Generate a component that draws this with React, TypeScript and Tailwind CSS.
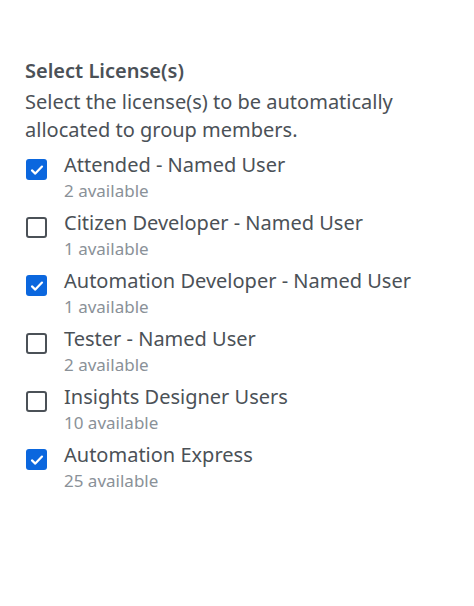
const licenses = [
  { name: "Attended - Named User", available: 2, checked: true },
  { name: "Citizen Developer - Named User", available: 1, checked: false },
  { name: "Automation Developer - Named User", available: 1, checked: true },
  { name: "Tester - Named User", available: 2, checked: false },
  { name: "Insights Designer Users", available: 10, checked: false },
  { name: "Automation Express", available: 25, checked: true },
];

function Checkbox({ checked }: { checked: boolean }) {
  if (checked) {
    return (
      <span className="flex h-[21px] w-[21px] shrink-0 items-center justify-center rounded-[3px] bg-[#0b67de]">
        <svg viewBox="0 0 16 16" className="h-[16px] w-[16px]" fill="none">
          <path
            d="M3 8.4l3.3 3.2L13 4.6"
            stroke="white"
            strokeWidth="2.2"
            strokeLinecap="round"
            strokeLinejoin="round"
          />
        </svg>
      </span>
    );
  }
  return (
    <span className="block h-[21px] w-[21px] shrink-0 rounded-[3px] border-2 border-[#4b5157] bg-white" />
  );
}

export default function App() {
  return (
    <div
      className="min-h-[606px] w-full bg-white pl-[25px] pr-4 pt-[57px] text-[#4b5157]"
      style={{ fontFamily: '"Noto Sans", sans-serif' }}
    >
      <h2 className="text-[20px] font-semibold leading-[28px]">Select License(s)</h2>
      <p className="mt-[3px] text-[20px] leading-[28px]">
        Select the license(s) to be automatically allocated to group members.
      </p>
      <div className="mt-[7px] flex flex-col gap-[6px]">
        {licenses.map((l) => (
          <label key={l.name} className="flex items-start gap-[17px]">
            <span className="pt-[8px] pl-[1px]">
              <Checkbox checked={l.checked} />
            </span>
            <span className="flex flex-col">
              <span className="text-[20px] leading-[28px]">{l.name}</span>
              <span className="text-[17px] leading-[24px] text-[#8a9198]">
                {l.available} available
              </span>
            </span>
          </label>
        ))}
      </div>
    </div>
  );
}
